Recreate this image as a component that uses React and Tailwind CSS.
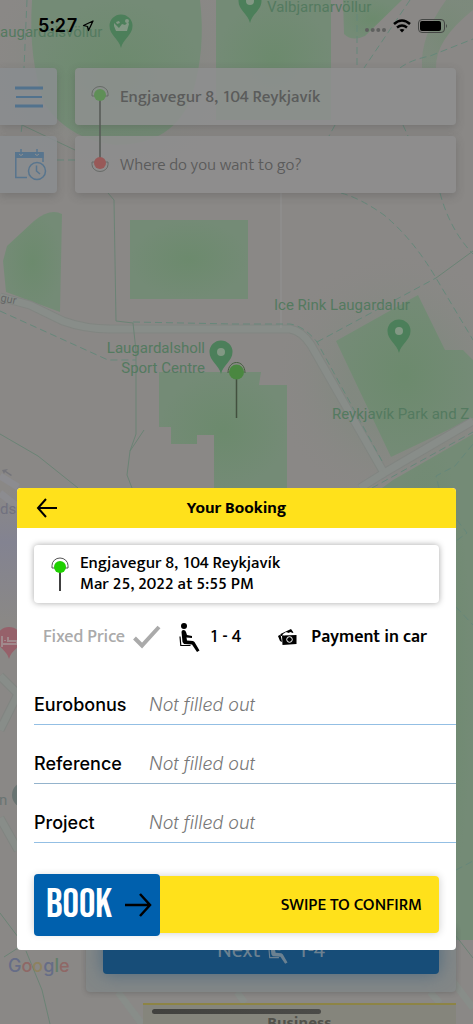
import { Navigation } from "lucide-react"

const fields = [
  { id: "eurobonus", label: "Eurobonus", line: "border-[#93bfe4]" },
  { id: "reference", label: "Reference", line: "border-[#94b3cc]" },
  { id: "project", label: "Project", line: "border-[#93bfe4]" },
]

function Pin({ x, y, children }) {
  return (
    <g transform={`translate(${x} ${y})`}>
      <path d="M0 22C-2 13-11.500 9-11.500 0a11.500 11.500 0 0 1 23 0C11.500 9 2 13 0 22Z" fill="#4c7f5a" />
      {children || <circle r="4" fill="#829884" />}
    </g>
  )
}

function Map() {
  return (
    <svg
      className="absolute inset-0 w-full h-full"
      viewBox="0 0 473 1024"
      preserveAspectRatio="xMidYMin slice"
      fontFamily="Roboto, sans-serif"
      aria-hidden="true"
    >
      <defs>
        <radialGradient id="park">
          <stop offset="0" stopColor="#6c8a6d" />
          <stop offset="1" stopColor="#748b76" />
        </radialGradient>
        <radialGradient id="glow">
          <stop offset="0.4" stopColor="#7c897c" stopOpacity="0.6" />
          <stop offset="1" stopColor="#8a8886" stopOpacity="0" />
        </radialGradient>
        <linearGradient id="edge" x2="0" y2="1">
          <stop offset="0" stopColor="#8a8886" />
          <stop offset="0.4" stopColor="#838391" />
          <stop offset="1" stopColor="#8a8886" />
        </linearGradient>
      </defs>
      <rect width="473" height="1024" fill="#8a8886" />
      <rect y="490" width="18" height="130" fill="url(#edge)" />
      <ellipse cx="115" cy="60" rx="130" ry="120" fill="url(#glow)" />
      <ellipse cx="400" cy="380" rx="130" ry="130" fill="url(#glow)" />

      <g fill="url(#park)">
        <path d="M32 0H200Q206 50 192 95 175 145 115 145 70 140 45 105 28 60 32 0Z" />
        <path d="M216 0H331V120H216Z" />
        <path d="M343 0H402L365 36Q352 42 344 34Z" />
        <path d="M473 0V10Q435 40 436 68H422Q420 36 446 0Z" opacity="0.6" />
        <path d="M3 261 7 246 34 221Q50 208 62 214L60 312 6 292Z" />
        <path d="M130 220H248V299H130Z" />
        <path d="M159 372H239L261 372 259 385H287V488H214V435H197V444H171V427H159Z" />
        <path d="M336 341 418 295 445 350 463 350 473 360V418L391 457Z" />
        <path d="M473 434V940H456V488H382L393 480Z" />
      </g>

      <g fill="none" stroke="#818581" strokeWidth="9">
        <path d="M0 297 30 305 63 321Q85 329 110 329H290Q302 331 311 345L384 473 473 421" />
        <path d="M384 473 360 488" />
        <path d="M0 676 18 694 0 730M0 818 18 850" />
      </g>
      <g fill="none" stroke="#888d89" strokeWidth="7">
        <path d="M0 297 30 305 63 321Q85 329 110 329H290Q302 331 311 345L384 473 473 421" />
        <path d="M384 473 360 488" />
        <path d="M0 476 18 487M0 493 17 506" stroke="#8c8c90" />
        <path d="M0 676 18 694 0 730M0 818 18 850" />
        <path d="M118 992 142 1024M237 992 245 1003M430 992 440 1003M452 980 473 1008" />
      </g>
      <path d="M281 193V328" stroke="#929292" fill="none" />

      <g fill="none" stroke="#6b8375">
        <path d="M114 200 116 321 133 323 136 351V434L130 451 127 475 132 488M144 430 130 451" />
        <path d="M108 193 114 200M22 125 75 150M0 434 38 456 78 488" />
        <path d="M0 913 18 937M26 951 42 990 50 1024M18 948 4 957M436 278 473 251M456 936 473 958" />
      </g>
      <g fill="none" stroke="#66877a" strokeDasharray="7 4">
        <path d="M27 0 24 68M22 125 21 134M57 160H75M0 311 108 360H136M133 322 233 324H290Q304 326 317 342L382 461" />
        <path d="M357 14V68M410 0 364 68M335 125 329 136M400 68Q410 60 430 56L473 39M403 125 408 136" />
        <path d="M341 193Q360 198 384 215 413 239 436 278L473 340M440 193Q450 230 473 254M317 342 436 278" />
        <path d="M372 488 473 432M439 488 436 476 455 466 473 444M456 607 473 625M457 520 467 533 456 541M456 870 473 861" />
      </g>
      <path d="m2 470 2 4 1-2 6 4 1-1-6-4 2-2Z" fill="#74747a" />

      <Pin x="121" y="26">
        <path d="M-7-3-2 2 1-2 4-1 7-4 8-2 6 5H-5L-7 0ZM4-5A2 2 0 1 1 8-5 2 2 0 1 1 4-5M-5-4-2-5-1-3-4-2Z" fill="#829884" />
      </Pin>
      <Pin x="250" y="1" />
      <Pin x="221" y="352" />
      <Pin x="399" y="331" />

      <g fill="#547a60" fontSize="15">
        <text x="-8" y="37">Laugardalsvöllur</text>
        <text x="267" y="12">Valbjarnarvöllur</text>
        <text x="274" y="310">Ice Rink Laugardalur</text>
        <text x="205" y="353" textAnchor="end">Laugardalsholl</text>
        <text x="205" y="373" textAnchor="end">Sport Centre</text>
        <text x="332" y="419">Reykjavík Park and Z</text>
      </g>
      <text x="0" y="301" fontSize="11" fill="#666" transform="rotate(12 0 301)">gur</text>
      <text x="0" y="514" fontSize="15" fill="#71717f">ds</text>
      <text x="-1" y="805" fontSize="15" fill="#697472">n</text>
      <circle cx="25" cy="795" r="13" fill="#697472" />
      <path d="M9 659C7 650-3 648-3 638a12 11 0 0 1 24 0C21 648 11 650 9 659Z" fill="#96616a" />
      <path d="M2 636V647M2 644H17V641H8V637M5 640V641" fill="none" stroke="#a18a8d" strokeWidth="2" />

      <path d="M228 373C228 359 245 359 245 373" fill="none" stroke="#45603f" strokeWidth="1" />
      <path d="M236.500 372V418" stroke="#43503f" strokeWidth="1.500" />
      <circle cx="236.500" cy="372" r="7.500" fill="#4a8740" />
    </svg>
  )
}

function StatusBar() {
  return (
    <div className="h-[68px] pt-4 pl-[38px] pr-[25px] flex justify-between items-start text-black">
      <div className="flex items-center gap-1 h-5">
        <span className="font-['Inter',sans-serif] text-[18px] leading-5 font-semibold">5:27</span>
        <Navigation className="w-3 h-3" strokeWidth={2.500} />
      </div>
      <div className="flex items-center gap-[7px] h-5">
        <svg className="w-[21px] h-1 mt-2" viewBox="0 0 21 4" fill="#5f605f">
          <circle cx="2" cy="2" r="2" />
          <circle cx="7.700" cy="2" r="2" />
          <circle cx="13.300" cy="2" r="2" />
          <circle cx="19" cy="2" r="2" />
        </svg>
        <svg className="w-[18px] h-[14px]" viewBox="0 0 18 14" fill="none" stroke="black" strokeWidth="2.500">
          <path d="M1 5Q9-2 17 5M4 8.500Q9 4.500 14 8.500" />
          <path d="m6.500 10.800 2.500 2.700 2.500-2.700Q9 9 6.500 10.800Z" fill="black" stroke="none" />
        </svg>
        <svg className="w-[30px] h-[14px]" viewBox="0 0 30 14">
          <rect x="0.500" y="0.500" width="26" height="13" rx="3.500" fill="none" stroke="#454745" />
          <rect x="2" y="2" width="21" height="10" rx="2" fill="black" />
          <path d="M28 5Q30 7 28 9Z" fill="#454745" />
        </svg>
      </div>
    </div>
  )
}

function SeatIcon({ className }) {
  return (
    <svg className={className} viewBox="0 0 21 29" fill="none" stroke="currentColor">
      <circle cx="5" cy="3" r="3" fill="currentColor" stroke="none" />
      <path
        d="M2.500 9Q2.500 7 4.500 7 6.500 7 7 9L8 12 13 13V15L7.500 14.500 8 17.500 14 18 15.500 19 20.500 27.500 18 29 13 21.500 5 21 3.500 19Z"
        fill="currentColor"
        stroke="none"
      />
      <path d="M1 13.500 1.800 22.500H11.500" strokeWidth="1.200" />
    </svg>
  )
}

function BackgroundScreen() {
  return (
    <div className="relative min-h-screen flex flex-col tabular-nums">
      <StatusBar />
      <div className="relative flex gap-[18px] pr-[17px]">
        <div className="w-[57px] flex flex-col gap-[11px]">
          <button type="button" aria-label="Menu" className="h-[57px] rounded-r-sm bg-[#8a8d8f]/85 shadow-[0_3px_8px_rgba(60,60,60,0.25)] pl-[15px]">
            <svg className="w-[29px] h-6" viewBox="0 0 29 24" stroke="#52728d">
              <path d="M0 3H28M0 21H28" strokeWidth="3" />
              <path d="M1 12H27" strokeWidth="2" />
            </svg>
          </button>
          <button type="button" aria-label="Schedule" className="h-[57px] rounded-r-sm bg-[#8a8d8f]/85 shadow-[0_3px_8px_rgba(60,60,60,0.25)] pl-[15px]">
            <svg className="w-8 h-8" viewBox="0 0 32 32" fill="none" stroke="#58758e" strokeWidth="1.500">
              <path d="M12 28.500H0.800V4H28V13M6 0V5M22 0V5" />
              <path d="M0 3H28.500V9H0Z" fill="#58758e" stroke="none" />
              <path d="M4 5Q6 8 8 5M20 5Q22 8 24 5" stroke="#8c8f91" strokeWidth="1" />
              <circle cx="22" cy="22" r="8.500" />
              <path d="M21.500 16.500V22L25 25" />
            </svg>
          </button>
        </div>
        <div className="flex-1 flex flex-col gap-[11px] font-['Mukta','Noto_Sans',sans-serif] text-[17px]">
          <div className="h-[57px] pl-[45px] pt-0.5 flex items-center rounded-sm bg-[#8e8f8f]/85 shadow-[0_3px_8px_rgba(60,60,60,0.25)] font-medium text-[#5b5c5b]">
            Engjavegur 8, 104 Reykjavík
          </div>
          <div className="h-[57px] pl-[45px] pt-0.5 flex items-center rounded-sm bg-[#8e8e8e]/90 shadow-[0_3px_8px_rgba(60,60,60,0.25)] font-light text-[#5b5b5b]">
            Where do you want to go?
          </div>
        </div>
        <svg className="absolute left-[91px] top-[17px] w-[18px] h-[88px]" viewBox="0 0 18 88" fill="none">
          <path d="M4 11H1V8.500A8 7 0 0 1 17 8.500V11H14M4 77H1V79.500A8 7 0 0 0 17 79.500V77H14" stroke="#686b68" />
          <path d="M9 10V78" stroke="#555955" strokeWidth="1.500" />
          <circle cx="9" cy="10" r="6" fill="#5f8f57" />
          <circle cx="9" cy="78" r="6" fill="#985958" />
        </svg>
      </div>

      <div className="mt-auto pl-[86px] pr-[17px]">
        <div className="rounded-sm bg-[#838787] px-[17px] pb-[18px] shadow-[0_1px_5px_rgba(60,60,60,0.3)]">
          <button type="button" className="w-full h-12 flex items-center justify-center gap-2 rounded-sm bg-[#174d78] shadow-[0_0_18px_rgba(55,92,122,0.7)] font-['Mukta','Noto_Sans',sans-serif] text-[22px] text-[#6b8191]">
            Next
            <SeatIcon className="w-5 h-7" />
            1-4
          </button>
        </div>
        <div className="ml-[57px] mt-[11px] h-[21px] overflow-hidden border-t-2 border-[#8d8445] bg-[#85857c] pt-1.5 text-center font-['Mukta','Noto_Sans',sans-serif] text-[17px] leading-6 font-bold text-[#51514b]">
          Business
        </div>
      </div>
      <div className="absolute bottom-2.5 left-[152px] w-[169px] h-[5px] rounded-full bg-linear-to-r from-[#41413e] to-[#4b4b48]" />
      <div className="absolute bottom-12 left-2 font-['Inter',sans-serif] text-[18px] leading-5 font-medium text-[#666d87]">
        G<span className="text-[#8f6866]">o</span><span className="text-[#8e8260]">o</span>g<span className="text-[#617f69]">l</span><span className="text-[#8f6866]">e</span>
      </div>
    </div>
  )
}

function BookingDialog() {
  return (
    <div role="dialog" aria-labelledby="booking-title" className="rounded-sm overflow-hidden bg-white text-black font-['Mukta','Noto_Sans',sans-serif] tabular-nums">
      <header className="h-10 px-[19px] grid grid-cols-[22px_1fr_22px] items-center bg-[#ffe11b]">
        <button type="button" aria-label="Back">
          <svg className="w-[22px] h-5" viewBox="0 0 22 20" fill="none" stroke="currentColor" strokeWidth="2">
            <path d="M21 10H2M10 1 2 10 10 19" />
          </svg>
        </button>
        <h1 id="booking-title" className="pt-0.5 text-center text-[17px] font-bold">Your Booking</h1>
      </header>

      <div className="pt-[17px] pb-[17px] pl-[17px]">
        <div className="mr-[17px] h-[58px] pl-[17px] flex items-center gap-[11px] rounded-sm shadow-[0_0_6px_rgba(0,0,0,0.35)] text-[17px] leading-[21px] font-medium">
          <svg className="w-[18px] h-[34px]" viewBox="0 0 18 34" fill="none">
            <path d="M4 11H1V8.500A8 7.500 0 0 1 17 8.500V11H14" stroke="#555" />
            <path d="M9 10V34" stroke="black" strokeWidth="1.500" />
            <circle cx="9" cy="10" r="6" fill="#1fd000" />
          </svg>
          <div>
            <p>Engjavegur 8, 104 Reykjavík</p>
            <p>Mar 25, 2022 at 5:55 PM</p>
          </div>
        </div>

        <div className="mt-[18px] mr-[29px] ml-[9px] h-8 flex items-center gap-[18px] text-[18px] font-medium">
          <div className="flex items-center gap-2 text-[#aaa]">
            Fixed Price
            <svg className="w-7 h-6" viewBox="0 0 28 24" fill="none" stroke="currentColor" strokeWidth="4">
              <path d="M1.500 13 9 20.500 26 2" />
            </svg>
          </div>
          <div className="flex items-center gap-[9px]">
            <SeatIcon className="w-[21px] h-[29px]" />
            1 - 4
          </div>
          <div className="ml-auto flex items-center gap-3.5 font-semibold">
            <svg className="w-[19px] h-4" viewBox="0 0 19 16">
              <path d="M2.500 5 13 0 15.500 3.500 14 4 13 3 10 4 8 3 5 5 4 7 3 7Z" fill="black" />
              <path d="M0 7 2.500 5.500 3 8 4 13 2 12Z" fill="black" />
              <path d="M4 6.500 18.500 6V15L4.500 16Z" fill="black" />
              <circle cx="11.500" cy="10.500" r="2.800" fill="none" stroke="white" />
              <path d="M6 6Q9 2.500 12 5" fill="none" stroke="white" />
            </svg>
            Payment in car
          </div>
        </div>

        <form className="mt-[13px]">
          {fields.map((f) => (
            <div key={f.id} className={`h-[59px] flex items-end pb-[5px] border-b font-['Inter',sans-serif] text-[18px] leading-7 ${f.line}`}>
              <label htmlFor={f.id} className="w-[115px] shrink-0 font-medium">{f.label}</label>
              <input
                id={f.id}
                placeholder="Not filled out"
                className="flex-1 min-w-0 italic font-light outline-none placeholder:text-[#777]"
              />
            </div>
          ))}
        </form>

        <div className="mt-[33px] mr-[17px] h-[57px] flex items-center justify-between pr-[17px] rounded-sm bg-[#ffe11b] shadow-[0_0_8px_rgba(0,0,0,0.2)]">
          <button type="button" className="w-[126px] h-[62px] shrink-0 pl-3 pr-2 flex items-center justify-between rounded-sm bg-[#0060ad]">
            <span className="font-['Bebas_Neue','Roboto',sans-serif] text-[41px] leading-[62px] text-white">BOOK</span>
            <svg className="w-[27px] h-6 text-black" viewBox="0 0 27 24" fill="none" stroke="currentColor" strokeWidth="2.500">
              <path d="M0 12H25M15 1 25 12 15 23" />
            </svg>
          </button>
          <span className="pt-0.5 text-[17px] font-medium">SWIPE TO CONFIRM</span>
        </div>
      </div>
    </div>
  )
}

function App() {
  return (
    <main className="relative min-h-screen overflow-hidden bg-[#8a8886]">
      <Map />
      <BackgroundScreen />
      <div className="absolute inset-0 px-[17px] pb-[74px] flex flex-col justify-end">
        <BookingDialog />
      </div>
    </main>
  )
}

export default App
